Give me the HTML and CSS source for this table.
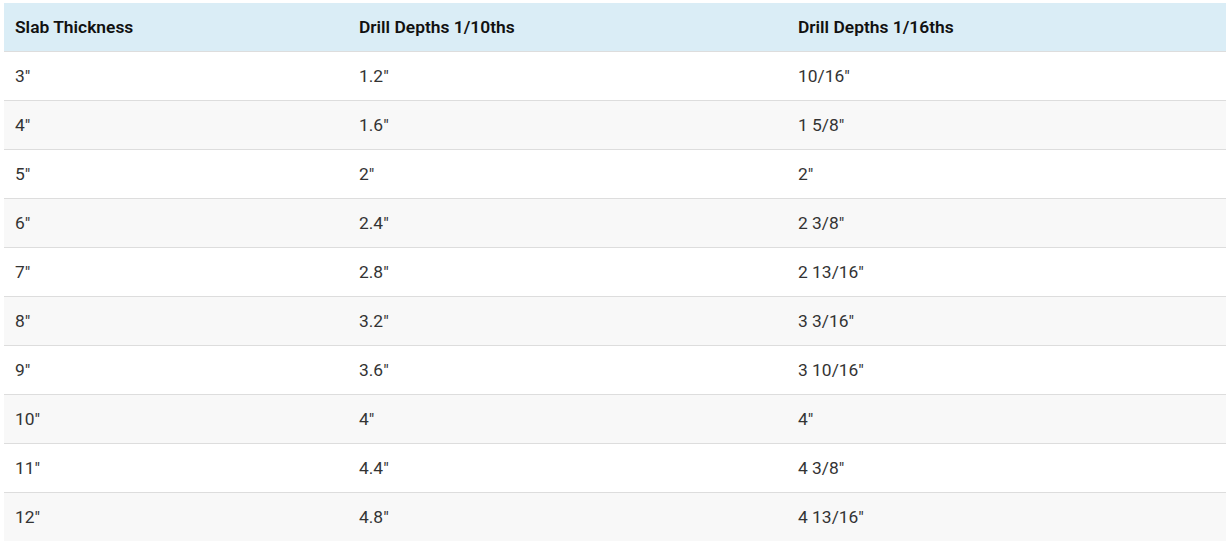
FILE: index.html
```html
<!DOCTYPE html>
<html lang="en">
<head>
<meta charset="utf-8">
<title>Drill Depths</title>
<link rel="stylesheet" href="styles.css">
</head>
<body>
<table class="depths">
  <colgroup>
    <col class="c1"><col class="c2"><col class="c3">
  </colgroup>
  <thead>
    <tr><th>Slab Thickness</th><th>Drill Depths 1/10ths</th><th>Drill Depths 1/16ths</th></tr>
  </thead>
  <tbody>
    <tr><td>3″</td><td>1.2″</td><td>10/16″</td></tr>
    <tr><td>4″</td><td>1.6″</td><td>1 5/8″</td></tr>
    <tr><td>5″</td><td>2″</td><td>2″</td></tr>
    <tr><td>6″</td><td>2.4″</td><td>2 3/8″</td></tr>
    <tr><td>7″</td><td>2.8″</td><td>2 13/16″</td></tr>
    <tr><td>8″</td><td>3.2″</td><td>3 3/16″</td></tr>
    <tr><td>9″</td><td>3.6″</td><td>3 10/16″</td></tr>
    <tr><td>10″</td><td>4″</td><td>4″</td></tr>
    <tr><td>11″</td><td>4.4″</td><td>4 3/8″</td></tr>
    <tr><td>12″</td><td>4.8″</td><td>4 13/16″</td></tr>
  </tbody>
</table>
</body>
</html>
```
FILE: styles.css
```css
html, body {
  margin: 0;
  background: #ffffff;
}
body {
  padding: 3px 5px 0 4px;
  font-family: Roboto, "DejaVu Sans", "Liberation Sans", Arial, sans-serif;
  font-size: 17.4px;
  color: #333333;
}
.depths {
  width: 1222px;
  border-collapse: collapse;
  table-layout: fixed;
}
.c1 { width: 344px; }
.c2 { width: 439px; }
.c3 { width: 439px; }
.depths th,
.depths td {
  padding: 0 11px;
  box-sizing: border-box;
  text-align: left;
  vertical-align: middle;
}
.depths th {
  height: 48px;
  background: #daedf6;
  color: #111111;
  font-weight: 600;
}
.depths td {
  height: 49px;
}
.depths tbody tr {
  border-top: 1px solid #dddddd;
}
.depths tbody tr:nth-child(even) {
  background: #f8f8f8;
}
```
